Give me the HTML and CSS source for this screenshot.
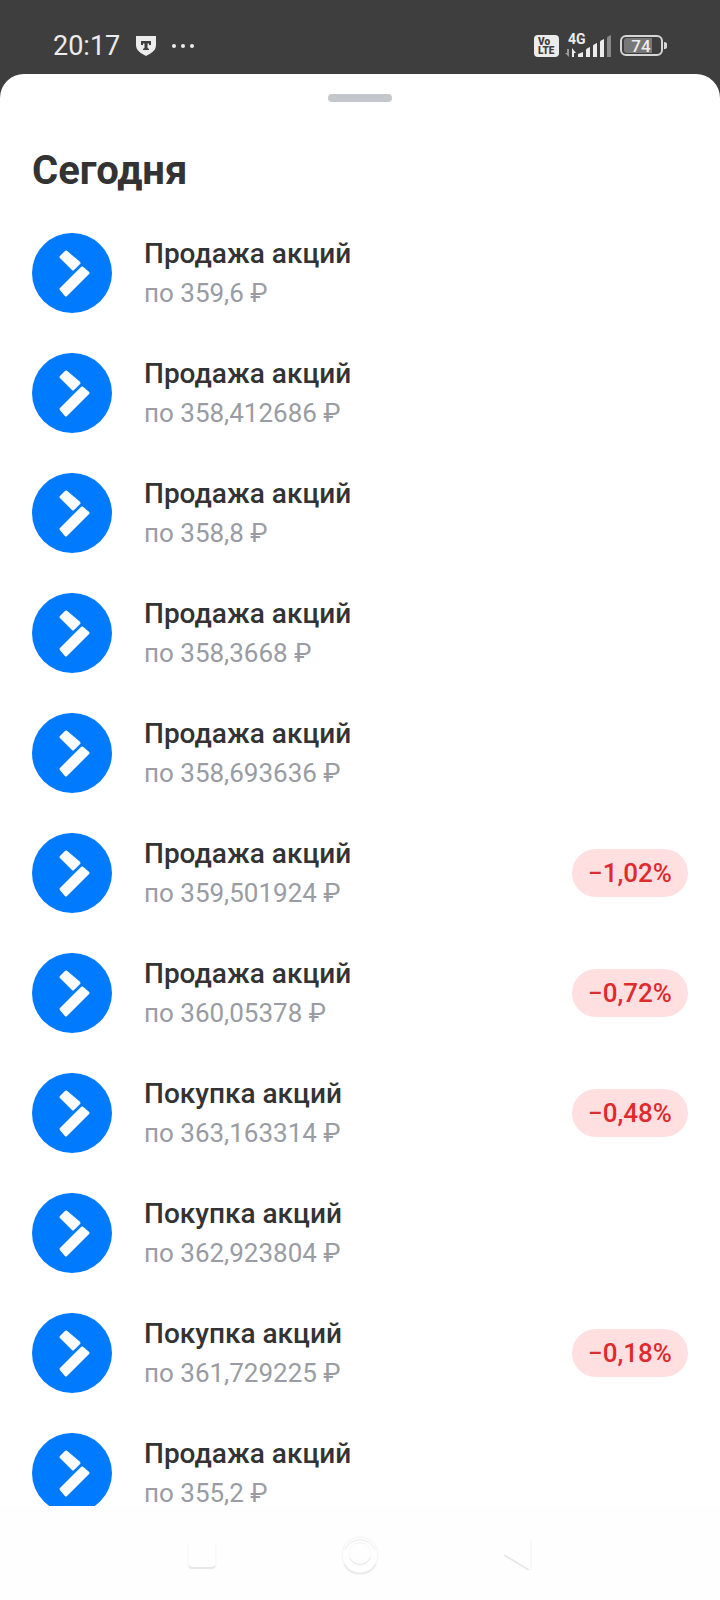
FILE: index.html
```html
<!DOCTYPE html>
<html lang="ru">
<head>
    <meta charset="UTF-8">
    <meta name="viewport" content="width=device-width, initial-scale=1.0">
    <title>Сегодня</title>
    <link rel="stylesheet" href="styles.css">
</head>
<body>
    <!-- Shared logo -->
    <svg class="sprite" aria-hidden="true">
        <symbol id="logo" viewBox="0 0 80 80">
            <path d="M34 19 L29 24 L41 36 L47 30 Z M50 35 L56 40 L34 62 L29 56 Z" fill="#fff" stroke="#fff" stroke-width="3" stroke-linejoin="round"/>
        </symbol>
    </svg>

    <header class="status-bar">
        <div class="status-left">
            <span class="clock">20:17</span>
            <svg class="shield" width="20" height="20" viewBox="0 0 20 20">
                <path d="M0 0H20V9C20 14 16 17 10 20C4 17 0 14 0 9Z" fill="#ececec"/>
                <path d="M5 5H15V9H13V7.500H11.500V12L13 13V14H7V13L8.500 12V7.500H7V9H5Z" fill="#3e3e3e"/>
            </svg>
            <svg class="dots" width="22" height="4" viewBox="0 0 22 4" fill="#ececec">
                <circle cx="2" cy="2" r="2"/>
                <circle cx="11" cy="2" r="2"/>
                <circle cx="20" cy="2" r="2"/>
            </svg>
        </div>
        <div class="status-right">
            <svg width="25" height="22" viewBox="0 0 25 22">
                <rect width="25" height="22" rx="4" fill="#ececec"/>
                <text x="4" y="10" class="volte">Vo</text>
                <text x="4" y="19" class="volte">LTE</text>
            </svg>
            <svg class="signal" width="49" height="24" viewBox="0 0 49 24" fill="#ececec">
                <text x="3" y="10" class="network">4G</text>
                <path d="M4 15V23L0 19H2V15Z" fill="#999"/>
                <path d="M7 23V14L11 19H9V23Z"/>
                <path d="M13 23V20L18 18V23Z"/>
                <path d="M21 23V16Q21 15 22 14.500L25 13V23Z"/>
                <path d="M28 23V12Q28 11 29 10.500L32 9V23Z"/>
                <path d="M35 23V8Q35 7 36 6.500L39 5V23Z"/>
                <path d="M42 23V4Q42 3 43 2.500L46 1V23Z" fill="#888"/>
            </svg>
            <svg class="battery" width="47" height="22" viewBox="0 0 47 22">
                <rect x="1" y="1" width="41" height="19" rx="5" fill="none" stroke="#d6d6d6" stroke-width="2"/>
                <path d="M7 3H32V18H7Q4 18 4 15V6Q4 3 7 3Z" fill="#777"/>
                <path d="M44 7Q47 7 47 9V12Q47 14 44 14Z" fill="#d6d6d6"/>
                <text x="21" y="17" text-anchor="middle" class="charge">74</text>
            </svg>
        </div>
    </header>

    <main class="sheet">
        <div class="handle"></div>
        <h1 class="title">Сегодня</h1>
        <ul class="operations">
            <li class="operation">
                <svg class="avatar"><use href="#logo"/></svg>
                <div class="info">
                    <h2 class="name">Продажа акций</h2>
                    <p class="price">по 359,6 ₽</p>
                </div>
            </li>
            <li class="operation">
                <svg class="avatar"><use href="#logo"/></svg>
                <div class="info">
                    <h2 class="name">Продажа акций</h2>
                    <p class="price">по 358,412686 ₽</p>
                </div>
            </li>
            <li class="operation">
                <svg class="avatar"><use href="#logo"/></svg>
                <div class="info">
                    <h2 class="name">Продажа акций</h2>
                    <p class="price">по 358,8 ₽</p>
                </div>
            </li>
            <li class="operation">
                <svg class="avatar"><use href="#logo"/></svg>
                <div class="info">
                    <h2 class="name">Продажа акций</h2>
                    <p class="price">по 358,3668 ₽</p>
                </div>
            </li>
            <li class="operation">
                <svg class="avatar"><use href="#logo"/></svg>
                <div class="info">
                    <h2 class="name">Продажа акций</h2>
                    <p class="price">по 358,693636 ₽</p>
                </div>
            </li>
            <li class="operation">
                <svg class="avatar"><use href="#logo"/></svg>
                <div class="info">
                    <h2 class="name">Продажа акций</h2>
                    <p class="price">по 359,501924 ₽</p>
                </div>
                <span class="badge">−1,02%</span>
            </li>
            <li class="operation">
                <svg class="avatar"><use href="#logo"/></svg>
                <div class="info">
                    <h2 class="name">Продажа акций</h2>
                    <p class="price">по 360,05378 ₽</p>
                </div>
                <span class="badge">−0,72%</span>
            </li>
            <li class="operation">
                <svg class="avatar"><use href="#logo"/></svg>
                <div class="info">
                    <h2 class="name">Покупка акций</h2>
                    <p class="price">по 363,163314 ₽</p>
                </div>
                <span class="badge">−0,48%</span>
            </li>
            <li class="operation">
                <svg class="avatar"><use href="#logo"/></svg>
                <div class="info">
                    <h2 class="name">Покупка акций</h2>
                    <p class="price">по 362,923804 ₽</p>
                </div>
            </li>
            <li class="operation">
                <svg class="avatar"><use href="#logo"/></svg>
                <div class="info">
                    <h2 class="name">Покупка акций</h2>
                    <p class="price">по 361,729225 ₽</p>
                </div>
                <span class="badge">−0,18%</span>
            </li>
            <li class="operation">
                <svg class="avatar"><use href="#logo"/></svg>
                <div class="info">
                    <h2 class="name">Продажа акций</h2>
                    <p class="price">по 355,2 ₽</p>
                </div>
            </li>
        </ul>
    </main>

    <nav class="nav-bar">
        <button type="button" class="nav-button" aria-label="Недавние">
            <svg width="40" height="40" viewBox="0 0 40 40" fill="none">
                <path d="M6 8V28Q6 32 9 32H31Q34 32 34 28V8" stroke="#f5f5f5"/>
                <path d="M7 30Q8 32 10 32H30Q32 32 33 30" stroke="#e8e8e8" stroke-width="2"/>
            </svg>
        </button>
        <button type="button" class="nav-button" aria-label="Домой">
            <svg width="40" height="40" viewBox="0 0 40 40" fill="none">
                <circle cx="20" cy="19" r="18" stroke="#f3f3f3"/>
                <path d="M4 28A18 18 0 0 0 36 28" stroke="#ebebeb" stroke-width="2"/>
                <path d="M5 14A16 16 0 0 1 35 14" stroke="#ebebeb"/>
                <circle cx="20" cy="18" r="11" stroke="#f8f8f8"/>
                <path d="M10 22A11 11 0 0 0 30 22" stroke="#e8e8e8"/>
            </svg>
        </button>
        <button type="button" class="nav-button" aria-label="Назад">
            <svg width="40" height="40" viewBox="0 0 40 40" fill="none">
                <path d="M33 4V34" stroke="#f1f1f1"/>
                <path d="M6 19L31 34" stroke="#e8e8e8" stroke-width="2"/>
            </svg>
        </button>
    </nav>
</body>
</html>
```
FILE: styles.css
```css
* {
    margin: 0;
    padding: 0;
    box-sizing: border-box;
    font-family: Roboto, 'Noto Sans', sans-serif;
}

body {
    background-color: #3e3e3e;
    color: #333;
    height: 100vh;
    display: flex;
    flex-direction: column;
    overflow: hidden;
}

.sprite {
    display: none;
}

.status-bar {
    display: flex;
    justify-content: space-between;
    align-items: center;
    flex-shrink: 0;
    padding: 29px 53px 11px;
    color: #ececec;
}

.status-left,
.status-right {
    display: flex;
    align-items: center;
}

.status-left {
    gap: 16px;
}

.status-right {
    gap: 6px;
}

.clock {
    font-size: 27px;
    line-height: 34px;
}

.signal {
    overflow: visible;
}

.volte {
    font-size: 10px;
    font-weight: 900;
    fill: #3e3e3e;
}

.network {
    font-size: 14px;
    font-weight: 700;
}

.charge {
    font-size: 17px;
    font-weight: 500;
    fill: #ececec;
}

.sheet {
    flex: 1;
    min-height: 0;
    overflow: hidden;
    background-color: #fff;
    border-radius: 24px 24px 0 0;
    padding: 20px 32px 0;
}

.handle {
    width: 64px;
    height: 8px;
    margin: 0 auto;
    border-radius: 4px;
    background-color: #c3c6ca;
}

.title {
    font-size: 40px;
    font-weight: 700;
    line-height: 48px;
    padding: 45px 0 18px;
}

.operations {
    list-style: none;
}

.operation {
    display: flex;
    align-items: center;
    gap: 32px;
    padding: 20px 0;
}

.avatar {
    width: 80px;
    height: 80px;
    flex-shrink: 0;
    border-radius: 50%;
    background-color: #007aff;
}

.info {
    flex: 1;
}

.name {
    font-size: 28px;
    font-weight: 500;
    line-height: 40px;
}

.price {
    font-size: 26px;
    line-height: 38px;
    color: #999ca2;
}

.badge {
    padding: 0 16px;
    border-radius: 24px;
    background-color: #ffdfe0;
    color: #dd2b2e;
    font-size: 26px;
    font-weight: 500;
    line-height: 48px;
}

.nav-bar {
    display: flex;
    justify-content: center;
    align-items: center;
    flex-shrink: 0;
    gap: 118px;
    height: 94px;
    padding-top: 6px;
    background-color: #fefefe;
}

.nav-button {
    display: flex;
    border: none;
    background: none;
    cursor: pointer;
}
```
